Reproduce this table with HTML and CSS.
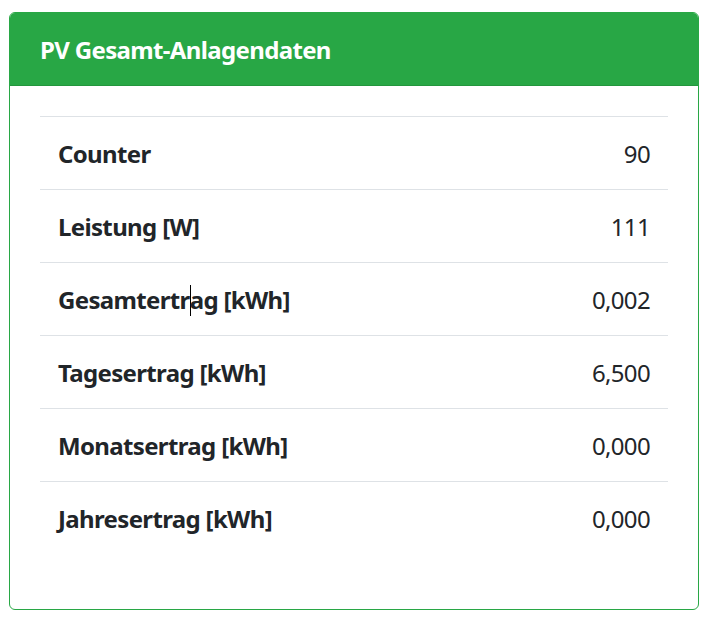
FILE: index.html
```html
<!DOCTYPE html>
<html lang="de">
<head>
<meta charset="utf-8">
<title>PV Gesamt-Anlagendaten</title>
<link rel="stylesheet" href="styles.css">
</head>
<body>
<div class="card">
  <div class="card-header">PV Gesamt-Anlagendaten</div>
  <div class="card-body">
    <table class="table">
      <tbody>
        <tr><th>Counter</th><td>90</td></tr>
        <tr><th>Leistung [W]</th><td>111</td></tr>
        <tr><th>Gesamtertr<span class="caret"></span>ag [kWh]</th><td>0,002</td></tr>
        <tr><th>Tagesertrag [kWh]</th><td>6,500</td></tr>
        <tr><th>Monatsertrag [kWh]</th><td>0,000</td></tr>
        <tr><th>Jahresertrag [kWh]</th><td>0,000</td></tr>
      </tbody>
    </table>
  </div>
</div>
</body>
</html>
```
FILE: styles.css
```css
html, body {
  margin: 0;
  background: #fff;
}
body {
  padding: 12px 11px 0 9px;
  font-family: "Noto Sans", "Open Sans", sans-serif;
  font-size: 24px;
  line-height: 1.5;
  letter-spacing: -0.65px;
  color: #212529;
}
.card {
  width: 690px;
  box-sizing: border-box;
  border: 1px solid #28a745;
  border-radius: 6px;
  overflow: hidden;
  background: #fff;
}
.card-header {
  background: #28a745;
  color: #fff;
  font-weight: 700;
  padding: 19px 30px 17px;
  border-bottom: 1px solid #23963d;
}
.card-body {
  padding: 30px;
}
.table {
  width: 100%;
  border-collapse: collapse;
  margin-bottom: 25px;
}
.table th,
.table td {
  border-top: 1px solid #dee2e6;
  padding: 19px 18px 17px;
  vertical-align: top;
}
.table th {
  text-align: left;
  font-weight: 700;
}
.table td {
  text-align: right;
  font-weight: 400;
}
.caret {
  display: inline-block;
  width: 1px;
  height: 31px;
  margin-right: -1px;
  background: #000;
  vertical-align: -7px;
}
```
